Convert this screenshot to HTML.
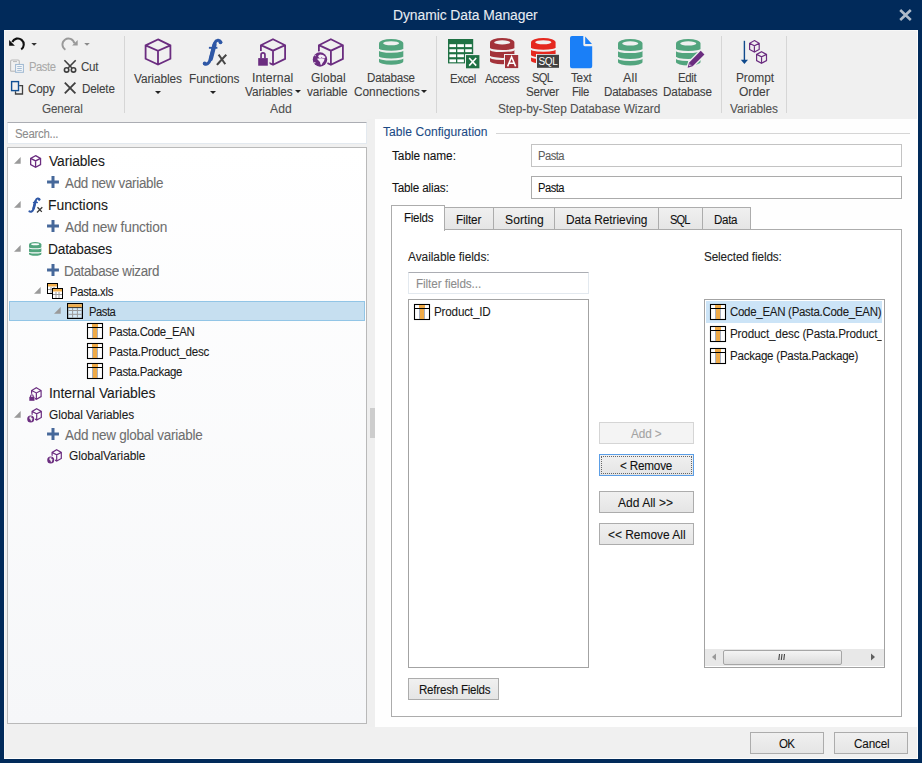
<!DOCTYPE html>
<html><head><meta charset="utf-8">
<style>
*{box-sizing:border-box;margin:0;padding:0}
html,body{width:922px;height:763px;overflow:hidden;background:#012a5a;font-family:"Liberation Sans",sans-serif}
.a{position:absolute}
.t{position:absolute;white-space:nowrap;font-family:"Liberation Sans",sans-serif;-webkit-text-stroke:0.08px currentColor}
svg{position:absolute;overflow:visible}
.sep{position:absolute;width:1px;background:#d6d6d6}
.tb{position:absolute;background:#fff;border:1px solid #e3e9ef;border-top-color:#abadb3}
.btn{position:absolute;border:1px solid #acacac;background:linear-gradient(#f0f0f0,#e5e5e5)}
.tab{position:absolute;border:1px solid #acacac;background:linear-gradient(#f0f0f0,#e5e5e5)}
</style></head><body>
<!-- content -->
<div class="a" style="left:4px;top:30px;width:914px;height:729px;background:#f0f0f0;border:1px solid #f7f7f7;border-right-color:#fdfdfd;border-bottom-color:#fdfdfd"></div>
<!-- ribbon separators -->
<div class="sep" style="left:124px;top:36px;height:77px"></div>
<div class="sep" style="left:436px;top:36px;height:77px"></div>
<div class="sep" style="left:721px;top:36px;height:77px"></div>
<div class="sep" style="left:786px;top:36px;height:77px"></div>
<!-- search -->
<div class="tb" style="left:7px;top:122px;width:360px;height:22px"></div>
<!-- tree -->
<div class="a" style="left:7px;top:147px;width:360px;height:577px;border:1px solid #b9b9b9;background:linear-gradient(#ffffff,#f6f7f9)"></div>
<div class="a" style="left:9px;top:301px;width:356px;height:20px;background:#c6dff0;border:1px solid #92c5e6"></div>
<!-- splitter -->
<div class="a" style="left:367px;top:119px;width:8px;height:608px;background:#efefef"></div>
<div class="a" style="left:370px;top:408px;width:5px;height:30px;background:#cdcdcd"></div>
<!-- right panel -->
<div class="a" style="left:375px;top:119px;width:543px;height:608px;background:#fefefe"></div>
<div class="a" style="left:496px;top:133px;width:414px;height:1px;background:#d5d5d5"></div>
<div class="a" style="left:531px;top:144px;width:371px;height:23px;border:1px solid #c3c3c3;background:#fff"></div>
<div class="a" style="left:531px;top:176px;width:371px;height:23px;border:1px solid #ababab;background:#fff"></div>
<!-- tabs -->
<div class="tab" style="left:444px;top:207px;width:50px;height:23px"></div>
<div class="tab" style="left:493px;top:207px;width:62px;height:23px"></div>
<div class="tab" style="left:554px;top:207px;width:105px;height:23px"></div>
<div class="tab" style="left:658px;top:207px;width:45px;height:23px"></div>
<div class="tab" style="left:702px;top:207px;width:49px;height:23px"></div>
<div class="a" style="left:391px;top:229px;width:511px;height:488px;border:1px solid #acacac;background:#fff"></div>
<div class="a" style="left:391px;top:205px;width:54px;height:26px;border:1px solid #acacac;border-bottom:none;background:#fff"></div>
<!-- filter + lists -->
<div class="tb" style="left:408px;top:272px;width:181px;height:22px"></div>
<div class="a" style="left:408px;top:299px;width:181px;height:369px;border:1px solid #a3a3a3;background:#fff"></div>
<div class="a" style="left:704px;top:299px;width:181px;height:369px;border:1px solid #a3a3a3;background:#fff"></div>
<div class="a" style="left:706px;top:301px;width:176px;height:22px;background:#cce4f7"></div>
<!-- scrollbar -->
<div class="a" style="left:705px;top:649px;width:179px;height:17px;background:#e8e8e8"></div>
<div class="a" style="left:723px;top:650px;width:119px;height:15px;border:1px solid #a6a6a6;border-radius:2px;background:linear-gradient(#f4f4f4,#dcdcdc)"></div>
<!-- buttons -->
<div class="btn" style="left:599px;top:422px;width:95px;height:22px;border-color:#d5d5d5;background:#f4f4f4"></div>
<div class="btn" style="left:599px;top:454px;width:95px;height:22px;border-color:#5b9ee6"></div>
<div class="a" style="left:601px;top:456px;width:91px;height:18px;border:1px dotted #666"></div>
<div class="btn" style="left:599px;top:491px;width:95px;height:22px"></div>
<div class="btn" style="left:599px;top:523px;width:95px;height:22px"></div>
<div class="btn" style="left:408px;top:678px;width:91px;height:22px"></div>
<!-- footer -->
<div class="a" style="left:5px;top:727px;width:912px;height:31px;background:#f0f0f0"></div>
<div class="btn" style="left:750px;top:732px;width:74px;height:22px"></div>
<div class="btn" style="left:834px;top:732px;width:74px;height:22px"></div>
<svg style="left:0px;top:0px" width="100" height="100" viewBox="0 0 100 100"><path d="M21.2,49.4 A6,6 0 1 0 12.3,42" fill="none" stroke="#111" stroke-width="2.1"/><path d="M9.1,40 L9.1,45.8 L14.9,45.8 Z" fill="#111"/><path d="M31.3,43 H36.9 L34.1,45.8 Z" fill="#333"/><path d="M65.4,49.7 A6,6 0 1 1 74.3,43.3" fill="none" stroke="#999" stroke-width="1.9"/><path d="M72.1,45.6 L77.7,45.6 L77.7,40.1 Z" fill="#999"/><path d="M84.2,43 H89.8 L87,45.8 Z" fill="#8a8a8a"/><path d="M10.6,71.2 V61.5 Q10.6,60 12,60 H18 Q19.3,60 19.3,61.5 V64" fill="none" stroke="#b9b9b9" stroke-width="1.1"/><path d="M10.6,71.2 H15" stroke="#b9b9b9" stroke-width="1.1"/><path d="M13,61.6 H17" stroke="#b9b9b9" stroke-width="1"/><rect x="15.6" y="64.5" width="7.8" height="7.8" fill="#fbfbfb" stroke="#a3bbd3" stroke-width="1.1"/><path d="M17.2,66.6 H21.8 M17.2,68.5 H21.8 M17.2,70.4 H21.8" stroke="#a3bbd3" stroke-width="1"/><circle cx="66.6" cy="69.9" r="2.2" fill="none" stroke="#3f3f3f" stroke-width="1.6"/><circle cx="73.5" cy="69.9" r="2.2" fill="none" stroke="#3f3f3f" stroke-width="1.6"/><path d="M64.4,60.2 L72,68 M75.7,60.2 L68.1,68" stroke="#3f3f3f" stroke-width="1.6"/><path d="M19.2,85.6 H22.5 V94 H15.5 V91.3" fill="none" stroke="#404040" stroke-width="1.3"/><rect x="11.6" y="81.6" width="6.9" height="9" fill="none" stroke="#0f4f94" stroke-width="1.4"/><path d="M64.8,82.6 L75.4,93.4 M75.4,82.6 L64.8,93.4" stroke="#3f3f3f" stroke-width="1.8"/></svg>
<svg style="left:144px;top:38px" width="28" height="28" viewBox="0 0 28 28"><g transform="translate(0.7,0.5)"><path d="M13.30,0.90 L25.70,6.82 L25.70,20.30 L13.30,26.10 L0.90,20.30 L0.90,6.82 Z M0.90,6.82 L13.30,12.24 L25.70,6.82 M13.30,12.24 L13.30,26.10" fill="none" stroke="#6b2d80" stroke-width="1.8" stroke-linejoin="miter"/></g></svg>
<svg style="left:155px;top:91px" width="6" height="3" viewBox="0 0 6 3"><path d="M0,0 L6,0 L3.0,3 Z" fill="#222"/></svg>
<svg style="left:0px;top:0px" width="240" height="80" viewBox="0 0 240 80"><path d="M220.6,41.8 C219.6,39.5 216.2,39.6 214.8,42.8 C213.5,46 211.6,56 209.9,60.5 C208.9,63.6 206.6,64.8 204.6,63.8" fill="none" stroke="#2f58a6" stroke-width="3.1" stroke-linecap="round"/><circle cx="220.5" cy="42.3" r="1.9" fill="#2f58a6"/><circle cx="204.7" cy="63.4" r="1.9" fill="#2f58a6"/><path d="M214.6,44.5 C213.4,48.5 212,55 210.8,58.8" fill="none" stroke="#2f58a6" stroke-width="4.2" stroke-linecap="round"/><path d="M208.9,47.8 H217.4" stroke="#2f58a6" stroke-width="1.9"/><path d="M218.6,54.6 C220.5,57 223,61 225.3,64.2 M226.3,54.7 C223,58 220,61.5 216.9,64.9" fill="none" stroke="#464646" stroke-width="2"/></svg>
<svg style="left:210px;top:91px" width="6" height="3" viewBox="0 0 6 3"><path d="M0,0 L6,0 L3.0,3 Z" fill="#222"/></svg>
<svg style="left:257px;top:38px" width="30" height="29" viewBox="0 0 30 29"><g transform="translate(3,0.3)"><path d="M13.00,0.90 L25.10,6.89 L25.10,20.54 L13.00,26.40 L0.90,20.54 L0.90,6.89 Z M0.90,6.89 L13.00,12.38 L25.10,6.89 M13.00,12.38 L13.00,26.40" fill="none" stroke="#6b2d80" stroke-width="1.8" stroke-linejoin="miter"/></g><rect x="0" y="13" width="12.5" height="15" fill="#f0f0f0"/><path d="M4.05,20.3 V16.8 A1.95,1.95 0 0 1 7.95,16.8 V20.3" fill="none" stroke="#6b2d80" stroke-width="1.7"/><rect x="1.2" y="20.1" width="9.6" height="7.6" fill="#6b2d80"/></svg>
<svg style="left:294.5px;top:90px" width="6" height="3" viewBox="0 0 6 3"><path d="M0,0 L6,0 L3.0,3 Z" fill="#222"/></svg>
<svg style="left:312px;top:38px" width="33" height="30" viewBox="0 0 33 30"><g transform="translate(6,0.3)"><path d="M12.90,0.90 L24.90,6.89 L24.90,20.54 L12.90,26.40 L0.90,20.54 L0.90,6.89 Z M0.90,6.89 L12.90,12.38 L24.90,6.89 M12.90,12.38 L12.90,26.40" fill="none" stroke="#6b2d80" stroke-width="1.8" stroke-linejoin="miter"/></g><circle cx="8" cy="21.5" r="8.3" fill="#f0f0f0"/><circle cx="8" cy="21.5" r="7.2" fill="#6b2d80"/><path d="M6,18 L8,16.5 L11,17 L13.5,19 L12.5,20.5 L10.5,20 L9.5,19.3 L8.5,20.2 L7,19.8 Z" fill="#f4eef7"/><path d="M5.5,20.5 L10,20.3 L12.5,21 L12,23 L10.5,25 L9.5,27 L8.5,26.5 L8,24 L6.5,22.5 L5.3,21.3 Z" fill="#f4eef7"/><circle cx="2.8" cy="24.8" r="0.8" fill="#e0d0e8"/><circle cx="3.2" cy="17.6" r="0.7" fill="#e0d0e8"/></svg>
<svg style="left:378.8px;top:39px" width="24.3" height="25.8" viewBox="0 0 24.3 25.8"><path d="M0,4.50 A12.15,4.50 0 0 1 24.30,4.50 L24.30,22.58 A12.15,3.23 0 0 1 0,22.58 Z" fill="#52a57e"/><ellipse cx="12.15" cy="4.30" rx="8.02" ry="2.05" fill="#f0f0f0"/><path d="M-0.5,9.97 A12.65,2.83 0 0 0 24.80,9.97" fill="none" stroke="#f0f0f0" stroke-width="1.95"/><path d="M-0.5,17.69 A12.65,2.83 0 0 0 24.80,17.69" fill="none" stroke="#f0f0f0" stroke-width="1.95"/></svg>
<svg style="left:421px;top:90px" width="6" height="3" viewBox="0 0 6 3"><path d="M0,0 L6,0 L3.0,3 Z" fill="#222"/></svg>
<svg style="left:447.8px;top:38.7px" width="33" height="31" viewBox="0 0 33 31"><rect x="0" y="0" width="25.2" height="24.4" fill="#1f7144"/><rect x="1.4" y="5.20" width="6.6" height="2.9" fill="#fff"/><rect x="9.3" y="5.20" width="6.6" height="2.9" fill="#fff"/><rect x="17.2" y="5.20" width="6.6" height="2.9" fill="#fff"/><rect x="1.4" y="10.25" width="6.6" height="2.9" fill="#fff"/><rect x="9.3" y="10.25" width="6.6" height="2.9" fill="#fff"/><rect x="17.2" y="10.25" width="6.6" height="2.9" fill="#fff"/><rect x="1.4" y="15.30" width="6.6" height="2.9" fill="#fff"/><rect x="9.3" y="15.30" width="6.6" height="2.9" fill="#fff"/><rect x="17.2" y="15.30" width="6.6" height="2.9" fill="#fff"/><rect x="1.4" y="20.35" width="6.6" height="2.9" fill="#fff"/><rect x="9.3" y="20.35" width="6.6" height="2.9" fill="#fff"/><rect x="17.2" y="20.35" width="6.6" height="2.9" fill="#fff"/><rect x="17" y="15.1" width="15.4" height="15.2" fill="#f0f0f0"/><rect x="18" y="16.1" width="13.4" height="13.2" fill="#1f7144"/><path d="M21.2,19 L28.2,26.6 M28.2,19 L21.2,26.6" stroke="#fff" stroke-width="1.6"/></svg>
<svg style="left:489.8px;top:37.6px" width="24.4" height="26.3" viewBox="0 0 24.4 26.3"><path d="M0,4.58 A12.20,4.58 0 0 1 24.40,4.58 L24.40,23.01 A12.20,3.29 0 0 1 0,23.01 Z" fill="#a3333a"/><ellipse cx="12.20" cy="4.38" rx="8.05" ry="2.09" fill="#f0f0f0"/><path d="M-0.5,10.16 A12.70,2.89 0 0 0 24.90,10.16" fill="none" stroke="#f0f0f0" stroke-width="1.99"/><path d="M-0.5,18.03 A12.70,2.89 0 0 0 24.90,18.03" fill="none" stroke="#f0f0f0" stroke-width="1.99"/></svg>
<svg style="left:504px;top:54px" width="15" height="15" viewBox="0 0 15 15"><rect x="0" y="0" width="15" height="15" fill="#f0f0f0"/><rect x="1" y="1" width="13.2" height="13.1" fill="#a3333a"/><path d="M3.6,12.4 L7.6,3 L11.6,12.4 M5.2,9.2 H10" fill="none" stroke="#fff" stroke-width="1.5"/></svg>
<svg style="left:530.9px;top:37.7px" width="24.6" height="25.7" viewBox="0 0 24.6 25.7"><path d="M0,4.48 A12.30,4.48 0 0 1 24.60,4.48 L24.60,22.49 A12.30,3.21 0 0 1 0,22.49 Z" fill="#e5281f"/><ellipse cx="12.30" cy="4.28" rx="8.12" ry="2.04" fill="#f0f0f0"/><path d="M-0.5,9.93 A12.80,2.82 0 0 0 25.10,9.93" fill="none" stroke="#f0f0f0" stroke-width="1.95"/><path d="M-0.5,17.62 A12.80,2.82 0 0 0 25.10,17.62" fill="none" stroke="#f0f0f0" stroke-width="1.95"/></svg>
<svg style="left:536px;top:54px" width="24" height="15" viewBox="0 0 24 15"><rect x="0" y="0" width="24" height="14.6" fill="#f0f0f0"/><rect x="1" y="0.8" width="22" height="13" fill="#414141"/><text x="12" y="11.3" text-anchor="middle" font-family="Liberation Sans" font-size="10" fill="#fff" letter-spacing="-0.4">SQL</text></svg>
<svg style="left:569.9px;top:35.9px" width="23" height="33" viewBox="0 0 23 33"><path d="M2,0 H13.3 V8.4 Q13.3,10.3 15.2,10.3 H22.2 V30.2 Q22.2,32.2 20.2,32.2 H2 Q0,32.2 0,30.2 V2 Q0,0 2,0 Z" fill="#1a7ff7"/><path d="M15.2,0.6 L22,8 H15.2 Z" fill="#1a7ff7"/></svg>
<svg style="left:617.8px;top:38.7px" width="24.5" height="26.4" viewBox="0 0 24.5 26.4"><path d="M0,4.60 A12.25,4.60 0 0 1 24.50,4.60 L24.50,23.10 A12.25,3.30 0 0 1 0,23.10 Z" fill="#52a57e"/><ellipse cx="12.25" cy="4.40" rx="8.09" ry="2.10" fill="#f0f0f0"/><path d="M-0.5,10.20 A12.75,2.90 0 0 0 25.00,10.20" fill="none" stroke="#f0f0f0" stroke-width="2.00"/><path d="M-0.5,18.10 A12.75,2.90 0 0 0 25.00,18.10" fill="none" stroke="#f0f0f0" stroke-width="2.00"/></svg>
<svg style="left:675.6px;top:38.7px" width="24.5" height="26.4" viewBox="0 0 24.5 26.4"><path d="M0,4.60 A12.25,4.60 0 0 1 24.50,4.60 L24.50,23.10 A12.25,3.30 0 0 1 0,23.10 Z" fill="#52a57e"/><ellipse cx="12.25" cy="4.40" rx="8.09" ry="2.10" fill="#f0f0f0"/><path d="M-0.5,10.20 A12.75,2.90 0 0 0 25.00,10.20" fill="none" stroke="#f0f0f0" stroke-width="2.00"/><path d="M-0.5,18.10 A12.75,2.90 0 0 0 25.00,18.10" fill="none" stroke="#f0f0f0" stroke-width="2.00"/></svg>
<svg style="left:0px;top:0px" width="720" height="80" viewBox="0 0 720 80"><path d="M702.3,53 L690.8,64.5" stroke="#f0f0f0" stroke-width="8"/><path d="M692.64,66.34 L688.96,62.66 L686.9,68.4 Z" fill="#f0f0f0" stroke="#f0f0f0" stroke-width="2.2"/><path d="M702.6,52.7 L690.8,64.5" stroke="#6b2d80" stroke-width="5.2"/><path d="M692.64,66.34 L688.96,62.66 L687.6,67.7 Z" fill="#6b2d80"/><path d="M690.9,65.6 L689.5,64.2 L689.2,66 Z" fill="#fff"/></svg>
<svg style="left:740px;top:40px" width="28" height="25" viewBox="0 0 28 25"><path d="M4.4,0.8 V20.5" stroke="#0f4a8c" stroke-width="1.4"/><path d="M0.8,19.8 H8 L4.4,24 Z" fill="#0f4a8c"/><g transform="translate(9,0)"><path d="M5.40,0.60 L10.20,3.30 L10.20,9.46 L5.40,12.10 L0.60,9.46 L0.60,3.30 Z M0.60,3.30 L5.40,5.77 L10.20,3.30 M5.40,5.77 L5.40,12.10" fill="none" stroke="#6b2d80" stroke-width="1.2" /></g><g transform="translate(16,11.1)"><path d="M5.55,0.60 L10.50,3.30 L10.50,9.46 L5.55,12.10 L0.60,9.46 L0.60,3.30 Z M0.60,3.30 L5.55,5.77 L10.50,3.30 M5.55,5.77 L5.55,12.10" fill="none" stroke="#6b2d80" stroke-width="1.2" stroke-linejoin="miter"/></g></svg>
<svg style="left:14.2px;top:157px" width="7" height="7" viewBox="0 0 7 7"><path d="M6.7,0 V6.7 H0 Z" fill="#9a9a9a"/></svg>
<svg style="left:14.2px;top:201px" width="7" height="7" viewBox="0 0 7 7"><path d="M6.7,0 V6.7 H0 Z" fill="#9a9a9a"/></svg>
<svg style="left:14.2px;top:245px" width="7" height="7" viewBox="0 0 7 7"><path d="M6.7,0 V6.7 H0 Z" fill="#9a9a9a"/></svg>
<svg style="left:34.2px;top:287.4px" width="7" height="7" viewBox="0 0 7 7"><path d="M6.7,0 V6.7 H0 Z" fill="#9a9a9a"/></svg>
<svg style="left:54.1px;top:307px" width="7" height="7" viewBox="0 0 7 7"><path d="M6.7,0 V6.7 H0 Z" fill="#9a9a9a"/></svg>
<svg style="left:14.2px;top:410.9px" width="7" height="7" viewBox="0 0 7 7"><path d="M6.7,0 V6.7 H0 Z" fill="#9a9a9a"/></svg>
<svg style="left:29.8px;top:154.9px" width="11.2" height="13" viewBox="0 0 11.2 13"><path d="M5.60,0.65 L10.55,3.40 L10.55,9.66 L5.60,12.35 L0.65,9.66 L0.65,3.40 Z M0.65,3.40 L5.60,5.92 L10.55,3.40 M5.60,5.92 L5.60,12.35" fill="none" stroke="#6b2d80" stroke-width="1.3" stroke-linejoin="miter"/></svg>
<svg style="left:46.95px;top:175.75px" width="12" height="12" viewBox="0 0 12 12"><path d="M6,0.05 V11.95 M0.05,6 H11.95" stroke="#46689a" stroke-width="3"/></svg>
<svg style="left:46.95px;top:219.75px" width="12" height="12" viewBox="0 0 12 12"><path d="M6,0.05 V11.95 M0.05,6 H11.95" stroke="#46689a" stroke-width="3"/></svg>
<svg style="left:46.95px;top:263.75px" width="12" height="12" viewBox="0 0 12 12"><path d="M6,0.05 V11.95 M0.05,6 H11.95" stroke="#46689a" stroke-width="3"/></svg>
<svg style="left:47.05px;top:428.1px" width="12" height="12" viewBox="0 0 12 12"><path d="M6,0.05 V11.95 M0.05,6 H11.95" stroke="#46689a" stroke-width="3"/></svg>
<svg style="left:0px;top:0px" width="50" height="220" viewBox="0 0 50 220"><path d="M39.4,199.4 C38.9,198 36.6,198.2 35.8,200.3 C35,202.5 33.9,207.5 33.2,209.6 C32.6,211.5 30.8,212.2 29.4,211.4" fill="none" stroke="#2f58a6" stroke-width="2" stroke-linecap="round"/><circle cx="39.2" cy="199.5" r="1.2" fill="#2f58a6"/><path d="M35.4,201.5 C34.8,203.5 34.2,206.5 33.6,208.5" fill="none" stroke="#2f58a6" stroke-width="2.6" stroke-linecap="round"/><path d="M32.9,202.5 H37.9" stroke="#2f58a6" stroke-width="1.3"/><path d="M37.5,207.3 L41.8,211.9 M42.3,207.3 L37,212.5" stroke="#3a3a3a" stroke-width="1.3"/></svg>
<svg style="left:28.9px;top:242.2px" width="12.4" height="13.7" viewBox="0 0 12.4 13.7"><path d="M0,2.39 A6.20,2.39 0 0 1 12.40,2.39 L12.40,11.99 A6.20,1.71 0 0 1 0,11.99 Z" fill="#52a57e"/><ellipse cx="6.20" cy="2.28" rx="4.09" ry="1.09" fill="#fcfcfd"/><path d="M-0.5,5.29 A6.70,1.50 0 0 0 12.90,5.29" fill="none" stroke="#fcfcfd" stroke-width="1.04"/><path d="M-0.5,9.39 A6.70,1.50 0 0 0 12.90,9.39" fill="none" stroke="#fcfcfd" stroke-width="1.04"/></svg>
<svg style="left:47px;top:283px" width="17" height="17" viewBox="0 0 17 17"><rect x="0.5" y="0.5" width="10" height="10" fill="#fff" stroke="#000" stroke-width="1"/><rect x="1" y="1" width="9" height="2.5" fill="#f0ae4c"/><path d="M1,6.5 H10 M4,4 V10 M7,4 V10" stroke="#9a9a9a" stroke-width="1"/><rect x="5.5" y="5.5" width="10" height="10" fill="#fff" stroke="#000" stroke-width="1"/><rect x="6" y="6" width="9" height="2.5" fill="#f0ae4c"/><path d="M6,11.5 H15 M9,9 V15 M12,9 V15" stroke="#9a9a9a" stroke-width="1"/></svg>
<svg style="left:67px;top:303px" width="16" height="16" viewBox="0 0 16 16"><rect x="0.6" y="0.6" width="14.8" height="14.8" fill="#d6ebf8" stroke="#000" stroke-width="1.2"/><rect x="1.2" y="1.2" width="13.6" height="3" fill="#f0ae4c"/><path d="M1.2,4.6 H14.8" stroke="#000" stroke-width="0.8"/><path d="M1.2,7.5 H14.8 M1.2,11.3 H14.8 M5.6,5 V14.8 M10.4,5 V14.8" stroke="#9a9a9a" stroke-width="1"/></svg>
<svg style="left:87px;top:323.1px" width="16" height="16" viewBox="0 0 16 16"><rect x="0.5" y="0.5" width="15" height="15" fill="#fff" stroke="#000" stroke-width="1.1"/><rect x="5" y="1" width="6" height="3.5" fill="#eeaa48"/><rect x="6" y="5" width="4" height="10" fill="#eeaa48"/><path d="M5.5,5 V15 M10.5,5 V15" stroke="#a8b0c0" stroke-width="1"/><path d="M1,4.5 H15" stroke="#000" stroke-width="1"/></svg>
<svg style="left:87px;top:343.1px" width="16" height="16" viewBox="0 0 16 16"><rect x="0.5" y="0.5" width="15" height="15" fill="#fff" stroke="#000" stroke-width="1.1"/><rect x="5" y="1" width="6" height="3.5" fill="#eeaa48"/><rect x="6" y="5" width="4" height="10" fill="#eeaa48"/><path d="M5.5,5 V15 M10.5,5 V15" stroke="#a8b0c0" stroke-width="1"/><path d="M1,4.5 H15" stroke="#000" stroke-width="1"/></svg>
<svg style="left:87px;top:363.1px" width="16" height="16" viewBox="0 0 16 16"><rect x="0.5" y="0.5" width="15" height="15" fill="#fff" stroke="#000" stroke-width="1.1"/><rect x="5" y="1" width="6" height="3.5" fill="#eeaa48"/><rect x="6" y="5" width="4" height="10" fill="#eeaa48"/><path d="M5.5,5 V15 M10.5,5 V15" stroke="#a8b0c0" stroke-width="1"/><path d="M1,4.5 H15" stroke="#000" stroke-width="1"/></svg>
<svg style="left:414px;top:304px" width="16" height="16" viewBox="0 0 16 16"><rect x="0.5" y="0.5" width="15" height="15" fill="#fff" stroke="#000" stroke-width="1.1"/><rect x="5" y="1" width="6" height="3.5" fill="#eeaa48"/><rect x="6" y="5" width="4" height="10" fill="#eeaa48"/><path d="M5.5,5 V15 M10.5,5 V15" stroke="#a8b0c0" stroke-width="1"/><path d="M1,4.5 H15" stroke="#000" stroke-width="1"/></svg>
<svg style="left:710px;top:304px" width="16" height="16" viewBox="0 0 16 16"><rect x="0.5" y="0.5" width="15" height="15" fill="#fff" stroke="#000" stroke-width="1.1"/><rect x="5" y="1" width="6" height="3.5" fill="#eeaa48"/><rect x="6" y="5" width="4" height="10" fill="#eeaa48"/><path d="M5.5,5 V15 M10.5,5 V15" stroke="#a8b0c0" stroke-width="1"/><path d="M1,4.5 H15" stroke="#000" stroke-width="1"/></svg>
<svg style="left:710px;top:325.8px" width="16" height="16" viewBox="0 0 16 16"><rect x="0.5" y="0.5" width="15" height="15" fill="#fff" stroke="#000" stroke-width="1.1"/><rect x="5" y="1" width="6" height="3.5" fill="#eeaa48"/><rect x="6" y="5" width="4" height="10" fill="#eeaa48"/><path d="M5.5,5 V15 M10.5,5 V15" stroke="#a8b0c0" stroke-width="1"/><path d="M1,4.5 H15" stroke="#000" stroke-width="1"/></svg>
<svg style="left:710px;top:347.5px" width="16" height="16" viewBox="0 0 16 16"><rect x="0.5" y="0.5" width="15" height="15" fill="#fff" stroke="#000" stroke-width="1.1"/><rect x="5" y="1" width="6" height="3.5" fill="#eeaa48"/><rect x="6" y="5" width="4" height="10" fill="#eeaa48"/><path d="M5.5,5 V15 M10.5,5 V15" stroke="#a8b0c0" stroke-width="1"/><path d="M1,4.5 H15" stroke="#000" stroke-width="1"/></svg>
<svg style="left:28.5px;top:386.8px" width="13" height="14" viewBox="0 0 13 14"><g transform="translate(2,0.2)"><path d="M5.35,0.60 L10.10,3.28 L10.10,9.38 L5.35,12.00 L0.60,9.38 L0.60,3.28 Z M0.60,3.28 L5.35,5.73 L10.10,3.28 M5.35,5.73 L5.35,12.00" fill="none" stroke="#6b2d80" stroke-width="1.2" stroke-linejoin="miter"/></g><rect x="0" y="6.8" width="6" height="7.2" fill="#fcfcfc"/><path d="M1.6,10 V9 A1.3,1.3 0 0 1 4.2,9 V10" fill="none" stroke="#6b2d80" stroke-width="1.1"/><rect x="0.3" y="9.8" width="5.2" height="4" fill="#6b2d80"/></svg>
<svg style="left:26.7px;top:408px" width="15.5" height="15" viewBox="0 0 15.5 15"><g transform="translate(4.5,0.2)"><path d="M5.20,0.60 L9.80,3.23 L9.80,9.22 L5.20,11.80 L0.60,9.22 L0.60,3.23 Z M0.60,3.23 L5.20,5.64 L9.80,3.23 M5.20,5.64 L5.20,11.80" fill="none" stroke="#6b2d80" stroke-width="1.2" stroke-linejoin="miter"/></g><circle cx="3.7" cy="10.9" r="4.3" fill="#fcfcfc"/><circle cx="3.7" cy="10.9" r="3.5" fill="#6b2d80"/><path d="M2.6,8.6 L4.8,8.6 L4.2,9.8 L5.6,10.3 L5,12.5 L4,13.5 L3.6,11.8 L2.4,10.8 Z" fill="#eee"/></svg>
<svg style="left:46.8px;top:448.7px" width="15.5" height="15" viewBox="0 0 15.5 15"><g transform="translate(4.5,0.2)"><path d="M5.20,0.60 L9.80,3.23 L9.80,9.22 L5.20,11.80 L0.60,9.22 L0.60,3.23 Z M0.60,3.23 L5.20,5.64 L9.80,3.23 M5.20,5.64 L5.20,11.80" fill="none" stroke="#6b2d80" stroke-width="1.2" stroke-linejoin="miter"/></g><circle cx="3.7" cy="10.9" r="4.3" fill="#fcfcfc"/><circle cx="3.7" cy="10.9" r="3.5" fill="#6b2d80"/><path d="M2.6,8.6 L4.8,8.6 L4.2,9.8 L5.6,10.3 L5,12.5 L4,13.5 L3.6,11.8 L2.4,10.8 Z" fill="#eee"/></svg>
<svg style="left:711px;top:653px" width="6" height="8" viewBox="0 0 6 8"><path d="M5,0.5 V7.5 L1,4 Z" fill="#9a9a9a"/></svg>
<svg style="left:870px;top:653px" width="6" height="8" viewBox="0 0 6 8"><path d="M1,0.5 V7.5 L5,4 Z" fill="#606060"/></svg>
<svg style="left:778px;top:653px" width="8" height="8" viewBox="0 0 8 8"><path d="M1.5,1 L0.8,7 M4,1 L3.3,7 M6.5,1 L5.8,7" stroke="#444" stroke-width="1.1"/></svg>
<svg style="left:898.5px;top:9px" width="13" height="12" viewBox="0 0 13 12"><path d="M1.2,1 L11.8,11 M11.8,1 L1.2,11" stroke="#afbbca" stroke-width="2.6"/></svg>
<div class="t" style="left:392.70px;top:7.50px;font-size:14px;line-height:14px;color:#e8edf3;transform:scaleX(0.9918);transform-origin:1.00px 0;letter-spacing:-0.064px;">Dynamic Data Manager</div>
<div class="t" style="left:28.90px;top:61.00px;font-size:12px;line-height:12px;color:#a9a9a9;transform:scaleX(0.9385);transform-origin:0.00px 0;letter-spacing:-0.508px;">Paste</div>
<div class="t" style="left:81.10px;top:61.00px;font-size:12px;line-height:12px;color:#404040;transform:scaleX(0.9679);transform-origin:0.00px 0;letter-spacing:-0.320px;">Cut</div>
<div class="t" style="left:28.20px;top:83.00px;font-size:12px;line-height:12px;color:#404040;transform:scaleX(0.9783);transform-origin:0.00px 0;letter-spacing:-0.207px;">Copy</div>
<div class="t" style="left:81.80px;top:83.00px;font-size:12px;line-height:12px;color:#404040;transform:scaleX(0.9741);transform-origin:0.00px 0;letter-spacing:-0.186px;">Delete</div>
<div class="t" style="left:42.30px;top:103.00px;font-size:12px;line-height:12px;color:#505050;transform:scaleX(0.9783);transform-origin:0.00px 0;letter-spacing:-0.155px;">General</div>
<div class="t" style="left:134.20px;top:73.00px;font-size:12px;line-height:12px;color:#404040;transform:scaleX(0.9874);transform-origin:0.00px 0;letter-spacing:-0.078px;">Variables</div>
<div class="t" style="left:188.50px;top:73.00px;font-size:12px;line-height:12px;color:#404040;transform:scaleX(0.9853);transform-origin:0.00px 0;letter-spacing:-0.097px;">Functions</div>
<div class="t" style="left:252.40px;top:72.00px;font-size:12px;line-height:12px;color:#404040;transform:scaleX(1.0162);transform-origin:1.00px 0;letter-spacing:0.087px;">Internal</div>
<div class="t" style="left:245.40px;top:85.70px;font-size:12px;line-height:12px;color:#404040;transform:scaleX(0.9854);transform-origin:0.00px 0;letter-spacing:-0.091px;">Variables</div>
<div class="t" style="left:270.40px;top:103.00px;font-size:12px;line-height:12px;color:#505050;transform:scaleX(1.0126);transform-origin:0.00px 0;letter-spacing:0.129px;">Add</div>
<div class="t" style="left:311.00px;top:72.00px;font-size:12px;line-height:12px;color:#404040;transform:scaleX(0.9997);transform-origin:0.00px 0;">Global</div>
<div class="t" style="left:307.00px;top:85.70px;font-size:12px;line-height:12px;color:#404040;transform:scaleX(0.9841);transform-origin:0.00px 0;letter-spacing:-0.098px;">variable</div>
<div class="t" style="left:366.90px;top:72.00px;font-size:12px;line-height:12px;color:#404040;transform:scaleX(0.9681);transform-origin:0.00px 0;letter-spacing:-0.243px;">Database</div>
<div class="t" style="left:353.90px;top:85.70px;font-size:12px;line-height:12px;color:#404040;transform:scaleX(0.9924);transform-origin:0.00px 0;letter-spacing:-0.051px;">Connections</div>
<div class="t" style="left:450.30px;top:72.60px;font-size:12px;line-height:12px;color:#404040;transform:scaleX(0.9481);transform-origin:0.00px 0;letter-spacing:-0.393px;">Excel</div>
<div class="t" style="left:485.30px;top:72.60px;font-size:12px;line-height:12px;color:#404040;transform:scaleX(0.9486);transform-origin:0.00px 0;letter-spacing:-0.419px;">Access</div>
<div class="t" style="left:531.80px;top:72.00px;font-size:12px;line-height:12px;color:#404040;transform:scaleX(0.9355);transform-origin:0.00px 0;letter-spacing:-0.839px;">SQL</div>
<div class="t" style="left:526.00px;top:85.50px;font-size:12px;line-height:12px;color:#404040;transform:scaleX(0.9696);transform-origin:0.00px 0;letter-spacing:-0.221px;">Server</div>
<div class="t" style="left:571.00px;top:72.00px;font-size:12px;line-height:12px;color:#404040;transform:scaleX(0.9719);transform-origin:0.00px 0;letter-spacing:-0.218px;">Text</div>
<div class="t" style="left:572.40px;top:85.50px;font-size:12px;line-height:12px;color:#404040;transform:scaleX(0.9476);transform-origin:0.00px 0;letter-spacing:-0.363px;">File</div>
<div class="t" style="left:623.00px;top:72.00px;font-size:12px;line-height:12px;color:#404040;transform:scaleX(1.0407);transform-origin:0.00px 0;letter-spacing:0.247px;">All</div>
<div class="t" style="left:603.70px;top:85.50px;font-size:12px;line-height:12px;color:#404040;transform:scaleX(0.9663);transform-origin:0.00px 0;letter-spacing:-0.250px;">Databases</div>
<div class="t" style="left:677.70px;top:72.00px;font-size:12px;line-height:12px;color:#404040;transform:scaleX(0.9521);transform-origin:0.00px 0;letter-spacing:-0.358px;">Edit</div>
<div class="t" style="left:663.30px;top:85.50px;font-size:12px;line-height:12px;color:#404040;transform:scaleX(0.9768);transform-origin:0.00px 0;letter-spacing:-0.175px;">Database</div>
<div class="t" style="left:735.80px;top:72.00px;font-size:12px;line-height:12px;color:#404040;transform:scaleX(0.9918);transform-origin:0.00px 0;letter-spacing:-0.065px;">Prompt</div>
<div class="t" style="left:739.20px;top:85.50px;font-size:12px;line-height:12px;color:#404040;transform:scaleX(1.0020);transform-origin:0.00px 0;letter-spacing:0.015px;">Order</div>
<div class="t" style="left:498.30px;top:103.00px;font-size:12px;line-height:12px;color:#505050;transform:scaleX(0.9908);transform-origin:0.00px 0;letter-spacing:-0.057px;">Step-by-Step Database Wizard</div>
<div class="t" style="left:730.00px;top:103.00px;font-size:12px;line-height:12px;color:#505050;transform:scaleX(0.9884);transform-origin:0.00px 0;letter-spacing:-0.072px;">Variables</div>
<div class="t" style="left:15.00px;top:128.00px;font-size:12px;line-height:12px;color:#8c8c8c;transform:scaleX(0.9529);transform-origin:0.00px 0;letter-spacing:-0.294px;">Search...</div>
<div class="t" style="left:49.00px;top:154.00px;font-size:14px;line-height:14px;color:#1a1a1a;transform:scaleX(0.9867);transform-origin:0.00px 0;letter-spacing:-0.097px;">Variables</div>
<div class="t" style="left:65.00px;top:176.00px;font-size:14px;line-height:14px;color:#6e6e6e;transform:scaleX(0.9581);transform-origin:0.00px 0;letter-spacing:-0.314px;">Add new variable</div>
<div class="t" style="left:48.00px;top:198.00px;font-size:14px;line-height:14px;color:#1a1a1a;transform:scaleX(0.9942);transform-origin:1.00px 0;letter-spacing:-0.044px;">Functions</div>
<div class="t" style="left:65.00px;top:220.00px;font-size:14px;line-height:14px;color:#6e6e6e;transform:scaleX(0.9760);transform-origin:0.00px 0;letter-spacing:-0.175px;">Add new function</div>
<div class="t" style="left:48.00px;top:242.00px;font-size:14px;line-height:14px;color:#1a1a1a;transform:scaleX(0.9778);transform-origin:1.00px 0;letter-spacing:-0.187px;">Databases</div>
<div class="t" style="left:64.00px;top:264.00px;font-size:14px;line-height:14px;color:#6e6e6e;transform:scaleX(0.9571);transform-origin:1.00px 0;letter-spacing:-0.328px;">Database wizard</div>
<div class="t" style="left:69.50px;top:286.00px;font-size:12px;line-height:12px;color:#1a1a1a;transform:scaleX(0.9447);transform-origin:0.00px 0;letter-spacing:-0.356px;">Pasta.xls</div>
<div class="t" style="left:89.40px;top:306.00px;font-size:12px;line-height:12px;color:#1a1a1a;transform:scaleX(0.9369);transform-origin:0.00px 0;letter-spacing:-0.522px;">Pasta</div>
<div class="t" style="left:109.40px;top:326.00px;font-size:12px;line-height:12px;color:#1a1a1a;transform:scaleX(0.9562);transform-origin:0.00px 0;letter-spacing:-0.329px;">Pasta.Code_EAN</div>
<div class="t" style="left:109.40px;top:346.00px;font-size:12px;line-height:12px;color:#1a1a1a;transform:scaleX(0.9674);transform-origin:0.00px 0;letter-spacing:-0.213px;">Pasta.Product_desc</div>
<div class="t" style="left:109.40px;top:366.00px;font-size:12px;line-height:12px;color:#1a1a1a;transform:scaleX(0.9547);transform-origin:0.00px 0;letter-spacing:-0.321px;">Pasta.Package</div>
<div class="t" style="left:48.60px;top:386.00px;font-size:14px;line-height:14px;color:#1a1a1a;transform:scaleX(0.9934);transform-origin:1.00px 0;letter-spacing:-0.042px;">Internal Variables</div>
<div class="t" style="left:49.00px;top:409.00px;font-size:12px;line-height:12px;color:#1a1a1a;transform:scaleX(0.9882);transform-origin:0.00px 0;letter-spacing:-0.069px;">Global Variables</div>
<div class="t" style="left:65.00px;top:428.00px;font-size:14px;line-height:14px;color:#6e6e6e;transform:scaleX(0.9632);transform-origin:0.00px 0;letter-spacing:-0.259px;">Add new global variable</div>
<div class="t" style="left:69.20px;top:450.00px;font-size:12px;line-height:12px;color:#1a1a1a;transform:scaleX(0.9914);transform-origin:0.00px 0;letter-spacing:-0.052px;">GlobalVariable</div>
<div class="t" style="left:383.30px;top:126.00px;font-size:12px;line-height:12px;color:#1b4a85;transform:scaleX(1.0057);transform-origin:0.00px 0;letter-spacing:0.032px;">Table Configuration</div>
<div class="t" style="left:392.00px;top:149.60px;font-size:12px;line-height:12px;color:#111;transform:scaleX(0.9889);transform-origin:0.00px 0;letter-spacing:-0.073px;">Table name:</div>
<div class="t" style="left:392.00px;top:182.00px;font-size:12px;line-height:12px;color:#111;transform:scaleX(0.9724);transform-origin:0.00px 0;letter-spacing:-0.154px;">Table alias:</div>
<div class="t" style="left:537.60px;top:150.00px;font-size:12px;line-height:12px;color:#5d5d5d;transform:scaleX(0.9321);transform-origin:0.00px 0;letter-spacing:-0.565px;">Pasta</div>
<div class="t" style="left:537.60px;top:181.50px;font-size:12px;line-height:12px;color:#111;transform:scaleX(0.9321);transform-origin:0.00px 0;letter-spacing:-0.565px;">Pasta</div>
<div class="t" style="left:403.60px;top:212.00px;font-size:12px;line-height:12px;color:#111;transform:scaleX(0.9608);transform-origin:0.00px 0;letter-spacing:-0.261px;">Fields</div>
<div class="t" style="left:456.20px;top:214.00px;font-size:12px;line-height:12px;color:#111;transform:scaleX(0.9762);transform-origin:0.00px 0;letter-spacing:-0.130px;">Filter</div>
<div class="t" style="left:505.10px;top:214.00px;font-size:12px;line-height:12px;color:#111;transform:scaleX(1.0087);transform-origin:0.00px 0;letter-spacing:0.054px;">Sorting</div>
<div class="t" style="left:566.30px;top:214.00px;font-size:12px;line-height:12px;color:#111;transform:scaleX(0.9919);transform-origin:0.00px 0;letter-spacing:-0.048px;">Data Retrieving</div>
<div class="t" style="left:670.00px;top:214.00px;font-size:12px;line-height:12px;color:#111;transform:scaleX(0.9273);transform-origin:0.00px 0;letter-spacing:-0.954px;">SQL</div>
<div class="t" style="left:714.20px;top:214.00px;font-size:12px;line-height:12px;color:#111;transform:scaleX(0.9635);transform-origin:0.00px 0;letter-spacing:-0.324px;">Data</div>
<div class="t" style="left:408.20px;top:251.00px;font-size:12px;line-height:12px;color:#222;transform:scaleX(0.9908);transform-origin:0.00px 0;letter-spacing:-0.048px;">Available fields:</div>
<div class="t" style="left:704.30px;top:250.60px;font-size:12px;line-height:12px;color:#222;transform:scaleX(0.9781);transform-origin:0.00px 0;letter-spacing:-0.121px;">Selected fields:</div>
<div class="t" style="left:416.20px;top:277.80px;font-size:12px;line-height:12px;color:#8c8c8c;transform:scaleX(0.9795);transform-origin:0.00px 0;letter-spacing:-0.095px;">Filter fields...</div>
<div class="t" style="left:434.40px;top:306.00px;font-size:12px;line-height:12px;color:#1a1a1a;transform:scaleX(0.9721);transform-origin:0.00px 0;letter-spacing:-0.192px;">Product_ID</div>
<div class="t" style="left:730.00px;top:306.00px;font-size:12px;line-height:12px;color:#1a1a1a;transform:scaleX(0.9579);transform-origin:0.00px 0;letter-spacing:-0.303px;width:158.7px;height:16px;overflow:hidden;">Code_EAN (Pasta.Code_EAN)</div>
<div class="t" style="left:730.00px;top:328.00px;font-size:12px;line-height:12px;color:#1a1a1a;transform:scaleX(0.9722);transform-origin:0.00px 0;letter-spacing:-0.173px;width:156.4px;height:16px;overflow:hidden;">Product_desc (Pasta.Product_</div>
<div class="t" style="left:730.00px;top:349.50px;font-size:12px;line-height:12px;color:#1a1a1a;transform:scaleX(0.9627);transform-origin:0.00px 0;letter-spacing:-0.244px;">Package (Pasta.Package)</div>
<div class="t" style="left:630.80px;top:428.00px;font-size:12px;line-height:12px;color:#a3a3a3;transform:scaleX(0.9829);transform-origin:0.00px 0;letter-spacing:-0.138px;">Add &gt;</div>
<div class="t" style="left:620.30px;top:460.00px;font-size:12px;line-height:12px;color:#111;transform:scaleX(0.9760);transform-origin:0.00px 0;letter-spacing:-0.194px;">&lt; Remove</div>
<div class="t" style="left:617.90px;top:496.70px;font-size:12px;line-height:12px;color:#111;transform:scaleX(1.0021);transform-origin:0.00px 0;letter-spacing:0.013px;">Add All &gt;&gt;</div>
<div class="t" style="left:608.20px;top:528.80px;font-size:12px;line-height:12px;color:#111;transform:scaleX(0.9972);transform-origin:0.00px 0;letter-spacing:-0.018px;">&lt;&lt; Remove All</div>
<div class="t" style="left:419.10px;top:683.70px;font-size:12px;line-height:12px;color:#111;transform:scaleX(0.9628);transform-origin:0.00px 0;letter-spacing:-0.230px;">Refresh Fields</div>
<div class="t" style="left:779.00px;top:738.00px;font-size:12px;line-height:12px;color:#111;transform:scaleX(0.9615);transform-origin:0.00px 0;letter-spacing:-0.694px;">OK</div>
<div class="t" style="left:854.00px;top:738.00px;font-size:12px;line-height:12px;color:#111;transform:scaleX(0.9770);transform-origin:0.00px 0;letter-spacing:-0.173px;">Cancel</div>
</body></html>
